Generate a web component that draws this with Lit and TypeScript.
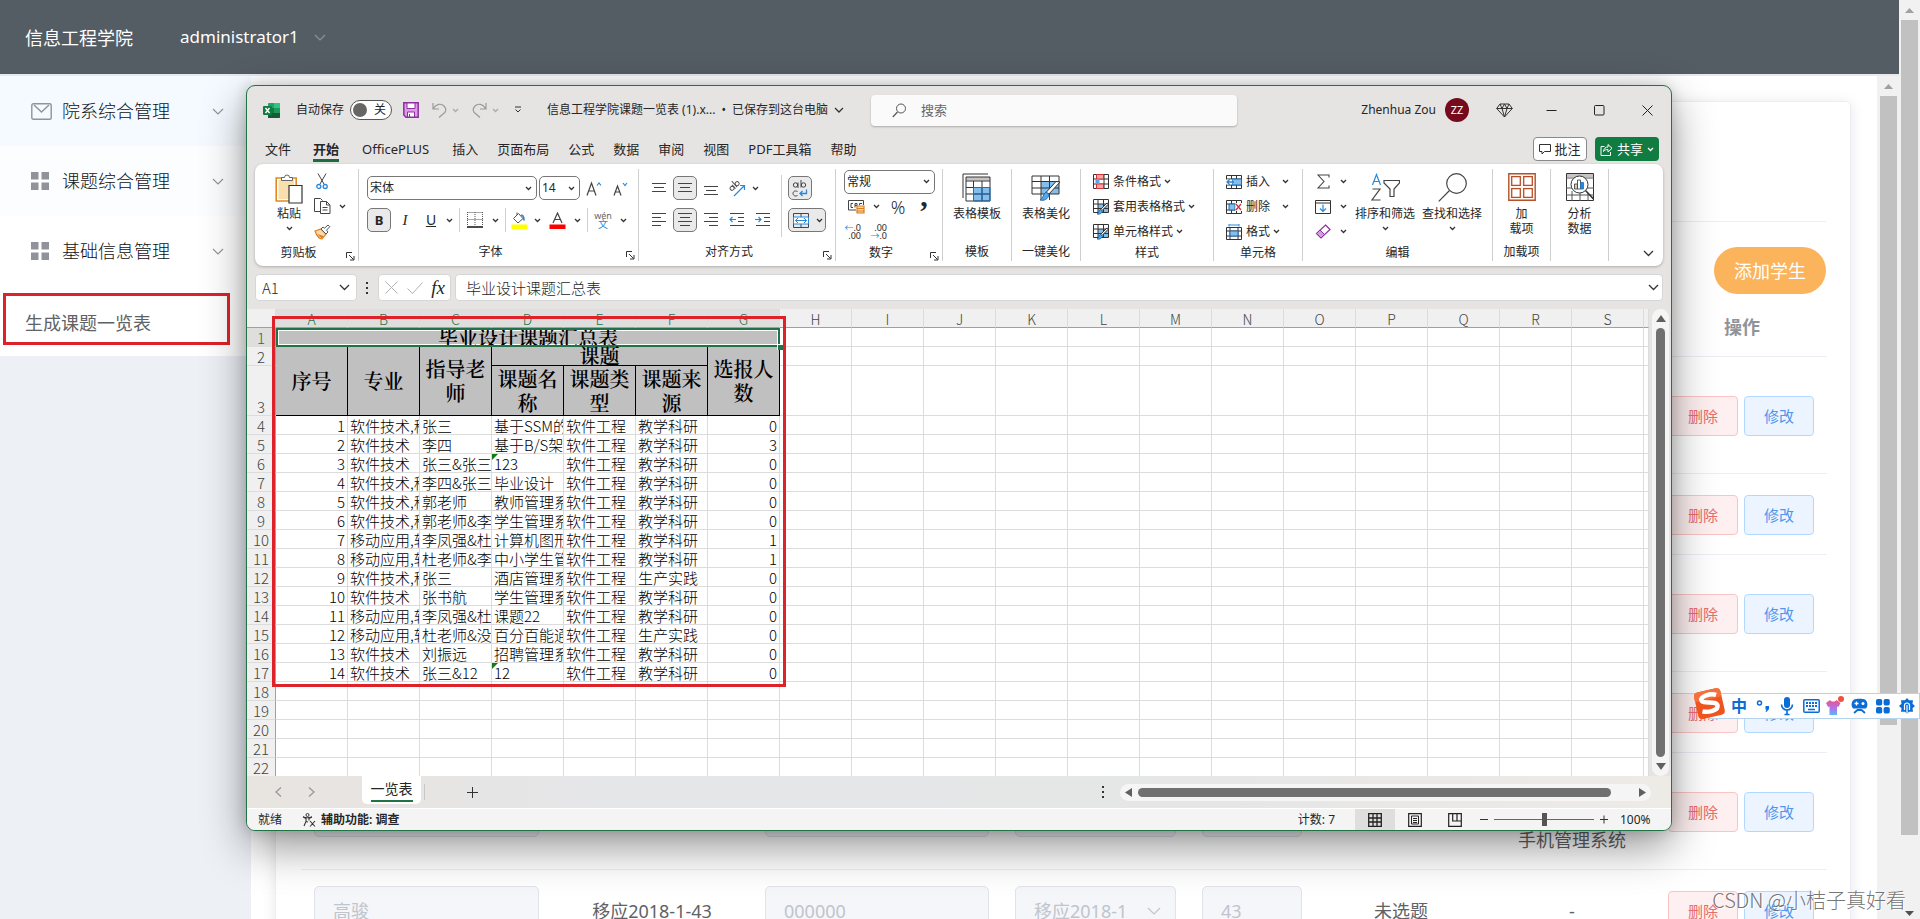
import { LitElement, html, css, svg, nothing } from "lit";
import { customElement } from "lit/decorators.js";

const icon = (w: number, h: number, body: unknown) =>
  html`<svg width=${w} height=${h} viewBox="0 0 ${w} ${h}" fill="none" aria-hidden="true">${body}</svg>`;

const chev = (w = 6, color = "#333", sw = 1.3) => {
  const h = Math.ceil(w / 2) + 2;
  return html`<svg width=${w + 2} height=${h} viewBox="0 0 ${w + 2} ${h}" fill="none" aria-hidden="true">
    <path d="M1 1 L${w / 2 + 1} ${w / 2 + 1} L${w + 1} 1" stroke=${color} stroke-width=${sw} />
  </svg>`;
};

const lines = (rows: [number, number, number][]) =>
  svg`${rows.map(([x1, x2, y]) => svg`<path d="M${x1} ${y + 0.5}H${x2}" stroke="#444"/>`)}`;

const I = {
  excel: icon(17, 17, svg`<rect x="5" y="1" width="12" height="15" rx="1" fill="#21a366"/><path d="M11 1h5a1 1 0 0 1 1 1v4h-6z" fill="#33c481"/><path d="M5 6h6v5H5z" fill="#107c41"/><path d="M11 6h6v5h-6z" fill="#1b9a5b"/><path d="M5 11h12v4a1 1 0 0 1-1 1H5z" fill="#185c37"/><rect x="0" y="4" width="9" height="9" rx="1" fill="#107c41"/><path d="M2.5 6l4 5M6.500 6l-4 5" stroke="#fff" stroke-width="1.400"/>`),
  save: icon(16, 16, svg`<path d="M.8.8h14.400v14.400H3L.8 13z" fill="#dc9be6" stroke="#8f2fa0" stroke-width="1.500"/><path d="M4 1h8v5.500H4z" fill="#fff" stroke="#8f2fa0"/><path d="M4.500 10h7v5h-7z" fill="#fff" stroke="#8f2fa0"/><path d="M6.500 12v3" stroke="#8f2fa0"/>`),
  undo: icon(15, 16, svg`<path d="M1 1v6h6M1.500 6.500C4 2 9 1 12 4s2 6-1 8l-4 3.500" stroke="#9a9a9a" stroke-width="1.200"/>`),
  redo: icon(15, 16, svg`<path d="M14 1v6H8M13.500 6.500C11 2 6 1 3 4s-2 6 1 8l4 3.500" stroke="#9a9a9a" stroke-width="1.200"/>`),
  custom: icon(8, 8, svg`<path d="M1 1h6M1.500 3.500L4 6l2.500-2.500" stroke="#333"/>`),
  search: icon(15, 15, svg`<circle cx="9" cy="5.500" r="4.500" stroke="#555"/><path d="M5.500 9L.8 14" stroke="#555" stroke-width="1.200"/>`),
  diamond: icon(17, 15, svg`<path d="M4 1h9l3.300 4.500L8.500 14 .7 5.500zM.7 5.500h15.600M4 1l2 4.500L8.500 14 11 5.500 13 1M8.500 1L6 5.500M8.500 1L11 5.500" stroke="#333"/>`),
  min: icon(11, 11, svg`<path d="M.5 5.500h10" stroke="#222"/>`),
  max: icon(11, 11, svg`<rect x=".5" y=".5" width="9.500" height="9.500" rx="1" stroke="#222"/>`),
  close: icon(11, 11, svg`<path d="M.5.500l10 10M10.500.500l-10 10" stroke="#222"/>`),
  comment: icon(12, 12, svg`<path d="M.5 1.500h11v7h-6l-2.500 2.500V8.500H.5z" stroke="#333"/>`),
  share: icon(13, 13, svg`<path d="M4.500 3.500H1v9h9.500V9" stroke="#fff"/><path d="M3.500 8.500c.5-3 2-4.500 4.500-4.500V1.500l4 3.800L8 9V6.500c-2 0-3.500.5-4.500 2z" stroke="#fff"/>`),
  paste: icon(28, 31, svg`<path d="M1.200 5h20v23H1.200z" fill="#fff" stroke="#e08a1e" stroke-width="1.600"/><path d="M3.500 7h15.500v19H3.500z" fill="#f9deae"/><path d="M6.500 7.500V4.500h3a2.500 2.500 0 0 1 5 0h3v3z" fill="#fff" stroke="#666"/><path d="M14 12.500h13v17.500H14z" fill="#fff" stroke="#333" stroke-width="1.200"/>`),
  cut: icon(12, 17, svg`<path d="M2 .5l6 10.500M10 .5L4 11" stroke="#444"/><circle cx="2.800" cy="13.500" r="2" stroke="#2b88d8" stroke-width="1.300"/><circle cx="9.200" cy="13.500" r="2" stroke="#2b88d8" stroke-width="1.300"/>`),
  copy: icon(17, 17, svg`<path d="M6 13.500H.5V.5h6l2 2" stroke="#444"/><path d="M6.500 3.500h6l3.500 3.500v8.500H6.500zM12.500 3.500V7H16M8.500 9.500h5M8.500 12h5" stroke="#444"/>`),
  brush: icon(17, 16, svg`<path d="M1 7l6-2 5 5-4 5c-3 0-5.500-4-7-8z" fill="#fbd9a5" stroke="#e07b1a" stroke-width="1.200"/><path d="M3 10l5 4.500 1.500-2.500z" fill="#e07b1a"/><path d="M7 5l2-2 1.500 1.200L14 1l1.800 1.700-3.300 3.500L14 8l-2 2z" fill="#fff" stroke="#555"/>`),
  launch: icon(9, 9, svg`<path d="M.5 6V.5H6M3 3l4.500 4.500M8 4v4H4" stroke="#333"/>`),
  grow: icon(16, 15, svg`<path d="M1 14.500L5.500 2l4.500 12.500M2.600 10h5.800" stroke="#444" stroke-width="1.200"/><path d="M11 4.500L13 2l2 2.500" stroke="#2b88d8" stroke-width="1.200"/>`),
  shrink: icon(16, 15, svg`<path d="M2 14.500L5.500 5 9 14.500M3.300 11h4.400" stroke="#444" stroke-width="1.200"/><path d="M11 2l2 2.500L15 2" stroke="#2b88d8" stroke-width="1.200"/>`),
  borders: icon(16, 16, svg`<path d="M.5.500h15M.5 7.500h15M.5 0v14M8 0v14M15.500 0v14" stroke="#555" stroke-dasharray="1 1"/><path d="M0 15h16" stroke="#111" stroke-width="1.500"/>`),
  fill: icon(17, 17, svg`<path d="M2.500 6.500l5-5 4.500 5-5 4.500z" stroke="#555" fill="#fff"/><path d="M6 3V.5" stroke="#555"/><path d="M10 3c2.500 0 3 2.500 3 5.500" stroke="#2b88d8" stroke-width="1.700"/><path d="M.5 12.500h16V17H.5z" fill="#ff0"/>`),
  fontColor: icon(17, 17, svg`<path d="M4 11L8.500 1 13 11M5.500 7.500h6" stroke="#444" stroke-width="1.200"/><path d="M.5 12.500h16V17H.5z" fill="#f00"/>`),
  orient: icon(17, 17, svg`<g transform="rotate(-42 6 7)"><circle cx="3" cy="6" r="2" stroke="#555"/><path d="M5.300 3.500V8.500M7.500.5v8" stroke="#555"/><circle cx="9.800" cy="6" r="2" stroke="#555"/></g><path d="M5 16L15 6M11 5.500h4.500V10" stroke="#2b88d8" stroke-width="1.200"/>`),
  wrap: icon(16, 17, svg`<circle cx="3.500" cy="5" r="2.200" stroke="#444"/><path d="M6 2.500V8M9 0v7.500" stroke="#444"/><circle cx="11.500" cy="5" r="2.200" stroke="#444"/><path d="M5.500 11.500c-3-1.500-4.500.5-4.500 2s2 3.500 4.500 2" stroke="#444"/><path d="M14.500 9.500v4H8M10.500 11L8 13.500l2.500 2.500" stroke="#2b88d8" stroke-width="1.300"/>`),
  merge: icon(16, 15, svg`<path d="M.5.500h15v14H.5zM8 .5V4M8 11v3.500" stroke="#444"/><path d="M.5 4h15v7H.5z" fill="#fff" stroke="#2b88d8"/><path d="M2.500 7.500h11M5 5L2.500 7.500 5 10M11 5l2.500 2.500L11 10" stroke="#2b88d8"/>`),
  money: icon(17, 15, svg`<path d="M8 11H.5V1.500h15V6" stroke="#444"/><path d="M5 4.500H3v4h2M7 8.500v-4h2v2H7M11.500 6V4.500H14" stroke="#444"/><path d="M9 7h7v7H9z" fill="#fbd9a5" stroke="#e07b1a" stroke-width="1.200"/><path d="M9 9.500h7M9 12h7" stroke="#e07b1a"/>`),
  table: icon(29, 29, svg`<path d="M1 25V1h25" stroke="#333"/><path d="M4 4h24v24H4z" fill="#fff"/><path d="M4 4h24v3.500H4z" fill="#c9c4c4"/><path d="M12 14.500h16V28H12z" fill="#83beec"/><path d="M4 4h24v24H4zM4 8h24M4 14.500h24M4 21h24M11.500 8v20M20 8v20" stroke="#333"/><path d="M11.500 14.500H28V28H11.500zM11.500 21H28M20 14.500V28" stroke="#1f6fb5"/>`),
  beauty: icon(30, 29, svg`<path d="M10 8h18v13H10z" fill="#83beec"/><path d="M10 27V3H1v18h27V3H10M1 8.500h27M1 15h27M18.500 3v24" stroke="#333"/><path d="M29 9L18 21l-3-1.500L25 8.500z" fill="#fff" stroke="#333"/><path d="M15 19l3 2.500c-1 5-5 6.500-9 5.500 3-1 3-6 6-8z" fill="#5aa5e2" stroke="#1f6fb5"/>`),
  cond: icon(16, 15, svg`<path d="M.5.500h15v14H.5zM.5 5h15M.5 10h15M5 .5v14M11 .5v14" stroke="#333"/><path d="M3.500.500h7v4.500h-7zM3.500 10h7v4.500h-7z" fill="#f7a6a6" stroke="#d13438"/><path d="M2.500 5h4v5h-4z" fill="#5aa5e2"/>`),
  fmt: icon(16, 16, svg`<path d="M5 5h10v9H5z" fill="#83beec"/><path d="M.5.500h15v13H.5zM.5 5h15M.5 9.500h15M5 .5v13M10.500.500v13" stroke="#333"/><path d="M15.500 5L9 11.500 7.500 10.500 14 4z" fill="#fff" stroke="#333"/><path d="M7.500 10.500L9.500 12c-1 3-3.500 3.500-5.500 3 2-1 1.500-3.500 3.500-4.500z" fill="#5aa5e2" stroke="#1f6fb5"/>`),
  insert: icon(16, 14, svg`<path d="M.5.500h15v13H.5zM.5 4h15M.5 10h15M5.500.500v13M10.500.500v13" stroke="#333"/><path d="M6 4h9.500v6H6z" fill="#83beec" stroke="#1f6fb5"/><path d="M0 4.500h6v5H0z" fill="#fff"/><path d="M8 7H1M4 4L1 7l3 3" stroke="#2b88d8" stroke-width="1.300"/>`),
  del: icon(16, 14, svg`<path d="M.5.500h15v13H.5zM.5 4h15M.5 10h15M5.500.500v13M10.500.500v13" stroke="#333"/><path d="M3 4h6v6H3z" fill="#83beec" stroke="#1f6fb5"/><path d="M9.500 3h6.500v8H9.500z" fill="#fff"/><path d="M10 4l5 6M15 4l-5 6" stroke="#d13438" stroke-width="1.300"/>`),
  format: icon(16, 16, svg`<path d="M.5 3.500h15v12H.5zM.5 7h15M.5 12h15M4 3.500v12M12 3.500v12" stroke="#333"/><path d="M4 7h8v5H4z" fill="#83beec" stroke="#1f6fb5"/><path d="M3 1h10M3 0v2.500M13 0v2.500" stroke="#2b88d8"/>`),
  sigma: icon(13, 15, svg`<path d="M12 3.500V1H1l6 6.500L1 14h11v-2.500" stroke="#444" stroke-width="1.100"/>`),
  down: icon(16, 14, svg`<path d="M.5.500h15v13H.5zM.5 3h15" stroke="#333"/><path d="M8 4.500v7M5 8.500l3 3 3-3" stroke="#2b88d8" stroke-width="1.200"/>`),
  eraser: icon(16, 15, svg`<path d="M10.500 1L15 5.500 6 14 1.500 9.500z" fill="#fff" stroke="#8f2fa0" stroke-width="1.200"/><path d="M5 6L9.500 10.500 6 14 1.500 9.500z" fill="#d59be0" stroke="#8f2fa0"/>`),
  sort: icon(29, 28, svg`<path d="M1.500 12L5.500 1.500 9.500 12M3 8.500h5" stroke="#2b88d8" stroke-width="1.200"/><path d="M1.500 16h7.500L1 27h8.500" stroke="#444" stroke-width="1.200"/><path d="M13 7.500h15.500v2.500l-5.500 6v7.500h-4v-7.500l-6-6z" stroke="#444" stroke-width="1.200"/>`),
  find: icon(29, 29, svg`<circle cx="18.500" cy="10.500" r="9.800" stroke="#444" stroke-width="1.200"/><path d="M11.500 17.500L.8 28.300" stroke="#444" stroke-width="1.200"/>`),
  addin: icon(28, 28, svg`<path d="M.8.8h26.400v26.400H.8z" fill="#fff7f0" stroke="#b5502a" stroke-width="1.400"/><path d="M3.700 3.700h8.600v8.600H3.700zM15.700 3.700h8.600v8.600h-8.600zM3.700 15.700h8.600v8.600H3.700zM15.700 15.700h8.600v8.600h-8.600z" fill="#fff" stroke="#b5502a" stroke-width="1.300"/>`),
  analyse: icon(28, 28, svg`<path d="M.5.500h27v27H.5z" fill="#fff" stroke="#333"/><path d="M1 1h26v3H1z" fill="#c9c4c4"/><path d="M0 5h28M0 15h28M0 22h28M6 18v10M14 18v10M22 20v8" stroke="#555"/><circle cx="13.500" cy="11.500" r="8.500" fill="#fff" stroke="#333"/><path d="M19.500 17.500l8 8.500" stroke="#333" stroke-width="1.600"/><path d="M8.500 11h3v5h-3z" fill="#ccc" stroke="#333" stroke-width=".8"/><path d="M11.500 7h3v9h-3z" fill="#fff" stroke="#333" stroke-width=".8"/><path d="M14.500 9.500h3V16h-3z" fill="#2b88d8" stroke="#1f6fb5" stroke-width=".8"/>`),
  access: icon(15, 14, svg`<circle cx="5.500" cy="2" r="1.500" stroke="#333"/><path d="M1 4l3 1.500v3L2 13M10 4L7 5.500v2M4 8.500l2 .5M1 4l4 .8h1L10 4M8 8l5 5.500M13 8l-5 5.500" stroke="#333" stroke-width="1.100"/>`),
  normal: icon(14, 14, svg`<path d="M.7.7h12.600v12.600H.7zM.7 5h12.600M.7 9h12.600M5 .7v12.600M9 .7v12.600" stroke="#222" stroke-width="1.300"/>`),
  layout: icon(14, 14, svg`<path d="M.7.700h12.600v12.600H.7z" stroke="#222" stroke-width="1.200"/><path d="M3.500 3h7v8h-7zM5 5.500h4M5 7.500h4M5 9.500h4" stroke="#222"/>`),
  breaks: icon(14, 14, svg`<path d="M.7.700h12.600v12.600H.7zM4.700.700v7.300h8.600M9 .7V8" stroke="#222" stroke-width="1.200"/>`),
  mail: icon(21, 17, svg`<rect x=".8" y=".8" width="19.400" height="15.400" rx="1.500" stroke="#909399" stroke-width="1.400"/><path d="M3 2l7.500 7L18 2" stroke="#909399" stroke-width="1.400"/>`),
  squares: icon(18, 18, svg`<path d="M0 0h7.500v7.500H0zM10.500 0H18v7.500h-7.500zM0 10.500h7.500V18H0zM10.500 10.500H18V18h-7.500z" fill="#909399"/>`),
  sogou: icon(34, 34, svg`<g transform="rotate(-13 17 17)"><rect x="3" y="3" width="27" height="27" rx="4" fill="#f0541e"/><path d="M3 7a4 4 0 0 1 4-4h19a4 4 0 0 1 4 4v5H3z" fill="#f4713d"/><path d="M25 9.500C20 6.500 9.500 7 9.500 11.500S24 14.500 24 20s-11 5-16 2.500" stroke="#fff" stroke-width="4.500"/></g>`),
  comma: icon(14, 16, svg`<circle cx="3.500" cy="5" r="2" stroke="#0a6cd6" stroke-width="1.500"/><path d="M9.500 8h3.500v3L10.500 14l-1-.5 1-2h-1z" fill="#0a6cd6"/>`),
  mic: icon(14, 19, svg`<rect x="4" y="0" width="6" height="11" rx="3" fill="#0a6cd6"/><path d="M1.500 7.500a5.500 5.500 0 0 0 11 0M7 13v5M4.500 17.500h5" stroke="#0a6cd6" stroke-width="1.600"/>`),
  kb: icon(17, 14, svg`<rect x=".8" y=".8" width="15.400" height="12.400" rx="1" stroke="#0a6cd6" stroke-width="1.500"/><path d="M3 4h11M3 7h11" stroke="#0a6cd6" stroke-width="2" stroke-dasharray="2 1"/><path d="M5 10.500h7" stroke="#0a6cd6" stroke-width="1.500"/>`),
  shirt: icon(19, 20, svg`<defs><linearGradient id="sh" x1="0" y1="0" x2="0" y2="1"><stop offset="0" stop-color="#f0508a"/><stop offset=".6" stop-color="#a878f0"/><stop offset="1" stop-color="#5ab8f8"/></linearGradient></defs><path d="M0 7l4-3c1.500 2 5 2 6.500 0l4 3-2 4-1.500-.5V19H3.500v-8.500L2 11z" fill="url(#sh)"/><circle cx="15" cy="3" r="3" fill="#f0503c"/>`),
  game: icon(17, 16, svg`<path d="M3 1.500C5 .5 12 .5 14 1.500c3 2 3 7 1 9H2C0 8.500 0 3.500 3 1.500z" fill="#0a6cd6"/><path d="M5.500 3.500v4M3.500 5.500h4" stroke="#fff" stroke-width="1.300"/><circle cx="12" cy="5.500" r="1.500" fill="#fff"/><path d="M3 15l3.500-3h4l3.500 3" stroke="#0a6cd6" stroke-width="1.800"/>`),
  apps: icon(14, 15, svg`<rect width="6.200" height="6.500" rx="1.800" fill="#0a6cd6"/><rect x="7.600" width="6.200" height="6.500" rx="1.800" fill="#0a6cd6"/><rect y="8" width="6.200" height="6.500" rx="1.800" fill="#0a6cd6"/><rect x="7.600" y="8" width="6.200" height="6.500" rx="1.800" fill="#0a6cd6"/>`),
  gear: icon(16, 16, svg`<path d="M8 0l2 2.200h4l-.5 3.600L16 8l-2.500 2.200.5 3.600h-4L8 16l-2-2.200H2l.5-3.600L0 8l2.500-2.200L2 2.200h4z" fill="#0a6cd6"/><path d="M8 16V7M5.500 12V7.500a2.500 2.500 0 0 1 5 0V12" stroke="#fff" stroke-width="1.200"/>`),
};

const A = {
  top: icon(16, 16, lines([[1, 15, 3], [3, 13, 7], [1, 15, 11]])),
  mid: icon(16, 16, lines([[1, 15, 3], [3, 13, 7], [1, 15, 11]])),
  bottom: icon(16, 16, lines([[1, 15, 6], [3, 13, 10], [1, 15, 14]])),
  left: icon(16, 16, lines([[1, 15, 1], [1, 10, 5], [1, 15, 9], [1, 10, 13]])),
  center: icon(16, 16, lines([[1, 15, 1], [3, 13, 5], [1, 15, 9], [3, 13, 13]])),
  right: icon(16, 16, lines([[1, 15, 1], [6, 15, 5], [1, 15, 9], [6, 15, 13]])),
  out: icon(16, 16, svg`${lines([[1, 15, 1], [9, 15, 5], [9, 15, 9], [1, 15, 13]])}<path d="M7 7.500H1M3.500 5L1 7.500 3.500 10" stroke="#2b88d8" stroke-width="1.200"/>`),
  in: icon(16, 16, svg`${lines([[1, 15, 1], [9, 15, 5], [9, 15, 9], [1, 15, 13]])}<path d="M0 7.500h6M3.500 5L6 7.500 3.500 10" stroke="#2b88d8" stroke-width="1.200"/>`),
};

const COLS = "ABCDEFGHIJKLMNOPQRS".split("");
const SHEET: string[][] = [
  ["1", "软件技术,移", "张三", "基于SSM的", "软件工程", "教学科研", "0"],
  ["2", "软件技术", "李四", "基于B/S架构", "软件工程", "教学科研", "3"],
  ["3", "软件技术", "张三&张三", "123", "软件工程", "教学科研", "0"],
  ["4", "软件技术,移", "李四&张三", "毕业设计", "软件工程", "教学科研", "0"],
  ["5", "软件技术,移", "郭老师", "教师管理系", "软件工程", "教学科研", "0"],
  ["6", "软件技术,移", "郭老师&李", "学生管理系", "软件工程", "教学科研", "0"],
  ["7", "移动应用,软", "李凤强&杜", "计算机图形", "软件工程", "教学科研", "1"],
  ["8", "移动应用,软", "杜老师&李", "中小学生管", "软件工程", "教学科研", "1"],
  ["9", "软件技术,移", "张三", "酒店管理系", "软件工程", "生产实践", "0"],
  ["10", "软件技术", "张书航", "学生管理系", "软件工程", "教学科研", "0"],
  ["11", "移动应用,软", "李凤强&杜", "课题22", "软件工程", "教学科研", "0"],
  ["12", "移动应用,软", "杜老师&没", "百分百能通", "软件工程", "生产实践", "0"],
  ["13", "软件技术", "刘振远", "招聘管理系", "软件工程", "教学科研", "0"],
  ["14", "软件技术", "张三&12", "12", "软件工程", "教学科研", "0"],
];

@customElement("sheet-window")
class SheetWindow extends LitElement {
  static styles = css`
    * { box-sizing: border-box; }
    :host {
      display: flex; flex-direction: column; overflow: hidden;
      border: 1px solid #217346; border-radius: 9px; background: #e6e4e2;
      color: #262626; font: 12px/16px "Noto Sans", "Noto Sans CJK SC", sans-serif;
      box-shadow: 0 16px 44px rgba(0, 0, 0, .42), 0 0 14px rgba(0, 0, 0, .16);
    }
    svg { display: block; flex: none; }
    button { font: inherit; color: inherit; background: none; border: 0; padding: 0; margin: 0; display: flex; align-items: center; justify-content: center; white-space: nowrap; }
    input, select { font: inherit; color: inherit; margin: 0; }
    .title { display: flex; align-items: center; height: 48px; flex: none; }
    .quick { display: flex; align-items: center; width: 300px; padding-left: 16px; flex: none; }
    .auto { display: flex; align-items: center; gap: 6px; margin: 0 11px 0 16px; white-space: nowrap; }
    .toggle { display: flex; align-items: center; justify-content: space-between; width: 42px; height: 20px; border: 1px solid #555; border-radius: 10px; background: #fff; padding: 0 5px 0 2px; }
    .toggle input { appearance: none; width: 14px; height: 14px; border-radius: 50%; background: #666; }
    .quick .undo { margin-left: 13px; gap: 5px; }
    .quick .more { margin-left: 15px; }
    .file { display: flex; align-items: center; gap: 6px; width: 324px; white-space: nowrap; flex: none; }
    .search { display: flex; align-items: center; gap: 14px; width: 366px; height: 31px; padding-left: 21px; background: #fafafa; border-radius: 4px; box-shadow: 0 1px 2px rgba(0, 0, 0, .25); font-size: 13px; }
    .search input { flex: 1; border: 0; background: none; outline: 0; padding: 0; min-width: 0; }
    .search input::placeholder { color: #666; opacity: 1; }
    .user { display: flex; align-items: center; margin-left: auto; }
    .avatar { width: 24px; height: 24px; border-radius: 50%; background: #750b1c; color: #fff; font-size: 11px; line-height: 24px; text-align: center; margin: 0 12px 0 9px; }
    .win { width: 48px; height: 32px; }
    .gem { width: 46px; height: 32px; }
    .tabs { display: flex; align-items: center; height: 30px; padding: 0 12px 0 18px; gap: 19px; font-size: 13px; line-height: 20px; flex: none; }
    .tabs .tab { height: 26px; border-bottom: 3px solid transparent; padding-top: 2px; }
    .tabs .tab:first-child { margin-right: 3px; }
    .tabs .tab:nth-child(3) { padding: 2px 4px 0; }
    .tabs .on { font-weight: 700; border-color: #1e6b41; }
    .note { margin-left: auto; height: 24px; width: 54px; gap: 3px; border: 1px solid #8a8a8a; border-radius: 4px; background: #fff; }
    .share { height: 24px; width: 64px; gap: 4px; border-radius: 4px; background: #107c41; color: #fff; margin-left: -11px; }
    .ribbon { display: flex; margin: 0 8px; height: 102px; padding: 5px 0; background: #fff; border-radius: 8px; box-shadow: 0 1px 3px rgba(0, 0, 0, .25); flex: none; }
    .group { display: flex; flex-direction: column; border-right: 1px solid #cfcfcf; flex: none; }
    .g58 { width: 58px; } .g69 { width: 69px; } .g89 { width: 89px; } .g104 { width: 104px; } .g107 { width: 107px; }
    .g133 { width: 133px; } .g190 { width: 190px; } .g197 { width: 197px; } .g280 { width: 280px; }
    .body { display: flex; height: 76px; justify-content: center; }
    .body.start { justify-content: flex-start; padding-left: 8px; }
    .body.near { padding-left: 6px; }
    .foot { display: flex; line-height: 18px; white-space: nowrap; }
    .foot span { flex: 1; text-align: center; }
    .foot button { align-self: flex-end; padding-bottom: 1px; width: 16px; }
    .big { display: flex; flex-direction: column; align-items: center; justify-content: flex-start; line-height: 15px; padding-top: 4px; }
    .big .pic { height: 33px; display: flex; }
    .big .arrow { margin-top: 5px; }
    .pair { display: flex; gap: 7px; padding-left: 4px; }
    .rows3 { display: flex; flex-direction: column; }
    .rows3 .line { height: 25px; }
    .shift { padding-left: 5px; }
    .line { display: flex; align-items: center; justify-content: flex-start; height: 24px; }
    .rows2 { display: flex; flex-direction: column; gap: 8px; padding-top: 7px; }
    .s12 { width: 12px; } .s16 { width: 16px; } .s24 { width: 24px; } .s28 { width: 28px; }
    .cell { display: flex; align-items: center; justify-content: center; height: 24px; flex: none; }
    .press { border: 1px solid #777; border-radius: 5px; background: #eaeaea; height: 24px; }
    .bar { width: 1px; height: 24px; background: #cfcfcf; margin: 0 1px 0 4px; }
    .bar.high { height: 62px; margin: 6px 6px 0 4px; }
    .combo { display: flex; align-items: center; height: 24px; border: 1px solid #777; border-radius: 5px; padding: 0 4px 0 2px; background: #fff; }
    .combo select { appearance: none; border: 0; background: none; outline: 0; flex: 1; min-width: 0; padding: 0; }
    .w170 { width: 170px; } .w40 { width: 41px; margin-left: 2px; } .w91 { width: 91px; }
    .bold { font-weight: 700; font-size: 13px; }
    .ital { font: italic 15px "Liberation Serif", serif; }
    .under { text-decoration: underline; font-size: 14px; }
    .wen { flex-direction: column; font-size: 9px; line-height: 9px; color: #666; }
    .wen b { font-weight: 400; color: #2b88d8; font-size: 10px; }
    .pct { font-size: 18px; font-weight: 300; }
    .com { font: 700 30px/2px "Liberation Serif", serif; align-items: flex-start; }
    .dec { flex-direction: column; font-size: 9px; line-height: 8px; align-items: flex-end; width: 17px; margin-right: 9px; }
    .dec i { font-style: normal; color: #2b88d8; }
    .cmd > svg { margin-left: 3px; }
    .push > svg { margin-left: 12px; }
    .collapse { margin: 0 9px 4px auto; align-self: flex-end; }
    .formula { display: flex; margin: 8px 8px; height: 27px; font-size: 15px; line-height: 20px; flex: none; font-family: "Noto Sans CJK SC", sans-serif; font-weight: 300; }
    .white { display: flex; align-items: center; background: #fff; border: 1px solid #d6d6d6; border-radius: 4px; padding: 0 8px 0 6px; }
    .white input { border: 0; outline: 0; padding: 0; min-width: 0; flex: 1; background: none; }
    .name { width: 102px; padding-right: 6px; }
    .dots { width: 21px; display: flex; align-items: center; justify-content: center; }
    .fx { width: 73px; justify-content: space-between; margin-right: 4px; padding-right: 5px; }
    .fx span { font: italic 19px "Liberation Serif", serif; }
    .long { flex: 1; padding-left: 10px; padding-right: 3px; }
    .area { display: flex; position: relative; height: 467px; flex: none; }
    .grid { flex: 1; overflow: hidden; background: #fff; min-width: 0; }
    table { border-collapse: separate; border-spacing: 0; table-layout: fixed; width: 1402px; font: 300 15px/16px "Noto Sans CJK SC", sans-serif; color: #000; }
    col { width: 72px; } col.rh { width: 29px; } col.last { width: 5px; }
    td, th { padding: 0; height: 19px; border-right: 1px solid #dcdcdc; border-bottom: 1px solid #dcdcdc; font-weight: 300; }
    th { padding-top: 2px; background: #f0f0f0; color: #444; }
    thead th { border-bottom-color: #a0a0a0; font-size: 14px; }
    tbody th { border-right-color: #a0a0a0; vertical-align: bottom; }
    thead .sel, tbody .sel { background: #dedede; color: #217346; }
    td div { height: 18px; overflow-x: clip; white-space: nowrap; padding: 2px 2px 0; }
    td.num { text-align: right; }
    td.flag { background: linear-gradient(135deg, #107c10 4px, transparent 4.5px); }
    .cap { background: #c0c0c0; border-color: #000; text-align: center; font-weight: 600; font-size: 20px; line-height: 24px; font-family: "Noto Serif CJK SC", "Noto Sans CJK SC", serif; padding: 0 5px; vertical-align: middle; }
    .cap div { padding: 0; line-height: 18px; }
    .cap.head { border: 2px solid #217346; padding: 0; box-shadow: inset 0 0 0 1px #fff; }
    .cap.head div { height: 15px; line-height: 15px; overflow: hidden; }
    .high { height: 50px; }
    .handle { position: absolute; left: 530px; top: 35px; width: 6px; height: 6px; background: #217346; border: 1px solid #fff; border-right: 0; border-bottom: 0; }
    .mark { position: absolute; left: 25px; top: 7px; width: 514px; height: 371px; border: 3px solid #dd2229; }
    .vscroll { width: 17px; margin: 0 2px 0 3px; border-radius: 9px; background: #f5f5f5; display: flex; flex-direction: column; align-items: center; gap: 6px; padding: 6px 0; }
    .vscroll i { flex: 1; width: 9px; border-radius: 5px; background: #707070; }
    .sheets { display: flex; align-items: center; height: 32px; background: linear-gradient(90deg, #e8e4e0, #e5e6e8 25%, #e6e6e6 70%, #eeebe6); padding: 0 20px 0 27px; flex: none; }
    .sheets .nav { width: 8px; margin-right: 25px; }
    .sheets .tabname { align-self: flex-start; height: 28px; width: 59px; background: #fff; border-radius: 0 0 5px 5px; font-size: 14px; margin-left: 22px; }
    .tabname span { border-bottom: 2px solid #217346; line-height: 22px; }
    .sep { width: 1px; height: 16px; background: #c8c8c8; margin: 0 42px 0 3px; }
    .hscroll { display: flex; align-items: center; gap: 6px; width: 531px; height: 17px; border-radius: 9px; background: #f5f5f5; padding: 0 5px; }
    .hscroll i { width: 473px; height: 9px; border-radius: 5px; background: #707070; }
    .hscroll svg:last-child { margin-left: auto; }
    .sheets .menu { margin-left: auto; margin-right: 15px; }
    .status { display: flex; align-items: center; flex: 1; background: #f4f4f4; border-top: 1px solid #fff; padding: 0 19px 0 11px; }
    .status .acc { display: flex; gap: 4px; margin-left: 20px; font-weight: 600; align-items: center; }
    .status .count { margin-left: auto; margin-right: 20px; }
    .status .view { width: 40px; height: 21px; }
    .status .cur { background: #dedede; }
    .zoom { display: flex; align-items: center; gap: 6px; margin-left: 5px; }
    .zoom input { appearance: none; width: 100px; height: 14px; background: linear-gradient(#666, #666) center / 100% 1px no-repeat; }
    .zoom input::-webkit-slider-thumb { appearance: none; width: 5px; height: 13px; background: #555; }
    .pc { margin-left: 12px; width: 32px; }
  `;

  private foot(text: string, launch = false) {
    return html`<div class="foot"><span>${text}</span>${launch ? html`<button aria-label=${text + "设置"}>${I.launch}</button>` : nothing}</div>`;
  }

  private cell(v: string, c: number) {
    const num = c === 0 || c === 6;
    const flag = c === 3 && /^\d+$/.test(v);
    return html`<td class="${num ? "num" : ""} ${flag ? "flag" : ""}"><div>${v}</div></td>`;
  }

  private blanks(n: number) {
    return Array.from({ length: n }, () => html`<td></td>`);
  }

  private grid() {
    return html`<table aria-label="毕业设计课题汇总表">
      <colgroup><col class="rh" />${COLS.map(() => html`<col />`)}<col class="last" /></colgroup>
      <thead><tr><th></th>${COLS.map((c, i) => html`<th class=${i < 7 ? "sel" : ""}>${c}</th>`)}<th></th></tr></thead>
      <tbody>
        <tr><th class="sel">1</th><td class="cap head" colspan="7"><div>毕业设计课题汇总表</div></td>${this.blanks(13)}</tr>
        <tr><th>2</th>
          <td class="cap" rowspan="2">序号</td><td class="cap" rowspan="2">专业</td><td class="cap" rowspan="2">指导老师</td>
          <td class="cap" colspan="3"><div>课题</div></td><td class="cap" rowspan="2">选报人数</td>${this.blanks(13)}</tr>
        <tr><th class="high">3</th><td class="cap">课题名称</td><td class="cap">课题类型</td><td class="cap">课题来源</td>${this.blanks(13)}</tr>
        ${SHEET.map((r, i) => html`<tr><th>${i + 4}</th>${r.map((v, c) => this.cell(v, c))}${this.blanks(13)}</tr>`)}
        ${[18, 19, 20, 21, 22].map((n) => html`<tr><th>${n}</th>${this.blanks(20)}</tr>`)}
      </tbody>
    </table>`;
  }

  private ribbon() {
    const c = chev(5);
    const big = (pic: unknown, a: string, b: unknown = nothing) =>
      html`<button class="big"><span class="pic">${pic}</span><span>${a}</span>${b}</button>`;
    const arrow = html`<span class="arrow">${c}</span>`;
    return html`<div class="ribbon">
      <section class="group g104">
        <div class="body start">
          <div class="cell s12"></div>
          ${big(I.paste, "粘贴", arrow)}
          <div class="rows3 shift">
            <div class="line"><button class="cell s28" aria-label="剪切">${I.cut}</button></div>
            <div class="line"><button class="cell s28" aria-label="复制">${I.copy}</button><span class="cell s12">${c}</span></div>
            <div class="line"><button class="cell s28" aria-label="格式刷">${I.brush}</button></div>
          </div>
        </div>${this.foot("剪贴板", true)}
      </section>
      <section class="group g280">
        <div class="body start"><div class="rows2">
          <div class="line">
            <label class="combo w170"><select aria-label="字体"><option>宋体</option></select>${c}</label>
            <label class="combo w40"><select aria-label="字号"><option>14</option></select>${c}</label>
            <button class="cell s28" aria-label="增大字号">${I.grow}</button><button class="cell s24" aria-label="减小字号">${I.shrink}</button>
          </div>
          <div class="line">
            <button class="press s24 bold">B</button><button class="cell s28 ital">I</button><button class="cell s24 under">U</button><span class="cell s12">${c}</span>
            <span class="bar"></span><button class="cell s28" aria-label="边框">${I.borders}</button><span class="cell s12">${c}</span>
            <span class="bar"></span><button class="cell s24" aria-label="填充颜色">${I.fill}</button><span class="cell s12">${c}</span>
            <button class="cell s28" aria-label="字体颜色">${I.fontColor}</button><span class="cell s12">${c}</span>
            <span class="bar"></span><button class="cell s28 wen"><span>wén</span><b>文</b></button><span class="cell s12">${c}</span>
          </div>
        </div></div>${this.foot("字体", true)}
      </section>
      <section class="group g197">
        <div class="body start near">
          <div class="rows2">
            <div class="line"><button class="cell s28" aria-label="顶端对齐">${A.top}</button><button class="press s24" aria-label="垂直居中">${A.mid}</button><button class="cell s28" aria-label="底端对齐">${A.bottom}</button><button class="cell s24" aria-label="方向">${I.orient}</button><span class="cell s12">${c}</span></div>
            <div class="line"><button class="cell s28" aria-label="左对齐">${A.left}</button><button class="press s24" aria-label="居中">${A.center}</button><button class="cell s28" aria-label="右对齐">${A.right}</button><button class="cell s24" aria-label="减少缩进">${A.out}</button><button class="cell s28" aria-label="增加缩进">${A.in}</button></div>
          </div>
          <span class="bar high"></span>
          <div class="rows2">
            <div class="line"><button class="press s24" aria-label="自动换行">${I.wrap}</button></div>
            <div class="line"><button class="press" aria-label="合并后居中"><span class="cell s24">${I.merge}</span><span class="cell s12">${c}</span></button></div>
          </div>
        </div>${this.foot("对齐方式", true)}
      </section>
      <section class="group g107">
        <div class="body start"><div class="rows3">
          <div class="line"><label class="combo w91"><select aria-label="数字格式"><option>常规</option></select>${c}</label></div>
          <div class="line"><button class="cell s24" aria-label="会计数字格式">${I.money}</button><span class="cell s16">${c}</span><button class="cell s28 pct">%</button><button class="cell s24 com">,</button></div>
          <div class="line"><button class="cell dec"><span><i>←</i>.0</span><span>.00</span></button><button class="cell dec"><span>.00</span><span><i>→</i>.0</span></button></div>
        </div></div>${this.foot("数字", true)}
      </section>
      <section class="group g69"><div class="body">${big(I.table, "表格模板")}</div>${this.foot("模板")}</section>
      <section class="group g69"><div class="body">${big(I.beauty, "表格美化")}</div>${this.foot("一键美化")}</section>
      <section class="group g133">
        <div class="body start"><div class="rows3">
          <button class="line cmd"><span class="cell s24">${I.cond}</span>条件格式${c}</button>
          <button class="line cmd"><span class="cell s24">${I.fmt}</span>套用表格格式${c}</button>
          <button class="line cmd"><span class="cell s24">${I.fmt}</span>单元格样式${c}</button>
        </div></div>${this.foot("样式")}
      </section>
      <section class="group g89">
        <div class="body start"><div class="rows3">
          <button class="line cmd push"><span class="cell s24">${I.insert}</span>插入${c}</button>
          <button class="line cmd push"><span class="cell s24">${I.del}</span>删除${c}</button>
          <button class="line cmd"><span class="cell s24">${I.format}</span>格式${c}</button>
        </div></div>${this.foot("单元格")}
      </section>
      <section class="group g190">
        <div class="body start">
          <div class="rows3">
            <div class="line"><button class="cell s24" aria-label="自动求和">${I.sigma}</button><span class="cell s16">${c}</span></div>
            <div class="line"><button class="cell s24" aria-label="填充">${I.down}</button><span class="cell s16">${c}</span></div>
            <div class="line"><button class="cell s24" aria-label="清除">${I.eraser}</button><span class="cell s16">${c}</span></div>
          </div>
          <div class="pair">${big(I.sort, "排序和筛选", arrow)}${big(I.find, "查找和选择", arrow)}</div>
        </div>${this.foot("编辑")}
      </section>
      <section class="group g58"><div class="body">${big(I.addin, "加", html`<span>载项</span>`)}</div>${this.foot("加载项")}</section>
      <section class="group g58"><div class="body">${big(I.analyse, "分析", html`<span>数据</span>`)}</div></section>
      <button class="collapse" aria-label="折叠功能区">${chev(9)}</button>
    </div>`;
  }

  render() {
    return html`
      <div class="title">
        <div class="quick">
          ${I.excel}
          <label class="auto">自动保存<span class="toggle"><input type="checkbox" />关</span></label>
          <button aria-label="保存">${I.save}</button>
          <button class="undo" aria-label="撤消">${I.undo}${chev(5, "#aaa")}</button>
          <button class="undo" aria-label="恢复">${I.redo}${chev(5, "#aaa")}</button>
          <button class="more" aria-label="自定义快速访问工具栏">${I.custom}</button>
        </div>
        <div class="file"><span>信息工程学院课题一览表 (1).x...</span><span>•</span><span>已保存到这台电脑</span>${chev(8)}</div>
        <label class="search">${I.search}<input type="search" placeholder="搜索" aria-label="搜索" /></label>
        <div class="user"><span>Zhenhua Zou</span><span class="avatar">ZZ</span>
          <button class="gem" aria-label="高级版">${I.diamond}</button>
          <button class="win" aria-label="最小化">${I.min}</button><button class="win" aria-label="最大化">${I.max}</button><button class="win" aria-label="关闭">${I.close}</button>
        </div>
      </div>
      <nav class="tabs">
        ${["文件", "开始", "OfficePLUS", "插入", "页面布局", "公式", "数据", "审阅", "视图", "PDF工具箱", "帮助"].map(
          (t, i) => html`<button class="tab ${i === 1 ? "on" : ""}">${t}</button>`
        )}
        <button class="note">${I.comment}批注</button>
        <button class="share">${I.share}共享${chev(5, "#fff")}</button>
      </nav>
      ${this.ribbon()}
      <div class="formula">
        <label class="white name"><input value="A1" aria-label="名称框" />${chev(9)}</label>
        <span class="dots">${icon(3, 12, svg`<path d="M0 0h2v2H0zM0 5h2v2H0zM0 10h2v2H0z" fill="#333"/>`)}</span>
        <div class="white fx">
          ${icon(13, 13, svg`<path d="M.5.500l12 12M12.500.500l-12 12" stroke="#b0b0b0"/>`)}
          ${icon(16, 12, svg`<path d="M.5 6.500l5 5 10-11" stroke="#b0b0b0"/>`)}
          <span>fx</span>
        </div>
        <label class="white long"><input value="毕业设计课题汇总表" aria-label="编辑栏" />${chev(9)}</label>
      </div>
      <div class="area">
        <div class="grid">${this.grid()}</div>
        <div class="vscroll">
          ${icon(10, 7, svg`<path d="M5 0l5 7H0z" fill="#606060"/>`)}<i></i>${icon(10, 7, svg`<path d="M0 0h10L5 7z" fill="#606060"/>`)}
        </div>
        <div class="handle"></div>
        <div class="mark"></div>
      </div>
      <div class="sheets">
        <button class="nav" aria-label="上一张">${icon(7, 10, svg`<path d="M6 .5L1 5l5 4.500" stroke="#999" stroke-width="1.300"/>`)}</button>
        <button class="nav" aria-label="下一张">${icon(7, 10, svg`<path d="M1 .5L6 5 1 9.500" stroke="#999" stroke-width="1.300"/>`)}</button>
        <button class="tabname"><span>一览表</span></button><span class="sep"></span>
        <button aria-label="新工作表">${icon(11, 11, svg`<path d="M5.500 0v11M0 5.500h11" stroke="#333"/>`)}</button>
        <span class="menu">${icon(3, 12, svg`<path d="M0 0h2v2H0zM0 5h2v2H0zM0 10h2v2H0z" fill="#333"/>`)}</span>
        <div class="hscroll">${icon(7, 9, svg`<path d="M7 0v9L0 4.500z" fill="#606060"/>`)}<i></i>${icon(7, 9, svg`<path d="M0 0v9l7-4.500z" fill="#606060"/>`)}</div>
      </div>
      <div class="status">
        <span>就绪</span><span class="acc">${I.access}辅助功能: 调查</span>
        <span class="count">计数: 7</span>
        <button class="view cur" aria-label="普通">${I.normal}</button><button class="view" aria-label="页面布局">${I.layout}</button><button class="view" aria-label="分页预览">${I.breaks}</button>
        <label class="zoom">${icon(8, 9, svg`<path d="M0 4.500h8" stroke="#333"/>`)}<input type="range" min="0" max="100" value="50" aria-label="缩放" />${icon(8, 9, svg`<path d="M0 4.500h8M4 .5v8" stroke="#333"/>`)}</label>
        <span class="pc">100%</span>
      </div>`;
  }
}

interface Student { name: string; no: string; pwd: string; cls: string; seat: string; state: string; topic: string; }
const EMPTY: Student = { name: "", no: "", pwd: "", cls: "", seat: "", state: "", topic: "" };
const STUDENTS: Student[] = [
  EMPTY, EMPTY, EMPTY, EMPTY,
  { ...EMPTY, topic: "手机管理系统" },
  { name: "高骏", no: "移应2018-1-43", pwd: "000000", cls: "移应2018-1", seat: "43", state: "未选题", topic: "-" },
];

@customElement("app-root")
class AppRoot extends LitElement {
  static styles = css`
    * { box-sizing: border-box; }
    :host { display: flex; position: relative; height: 100vh; overflow: hidden; font: 18px/28px "Noto Sans", "Noto Sans CJK SC", sans-serif; color: #606266; }
    svg { display: block; flex: none; }
    button { font: inherit; margin: 0; cursor: pointer; }
    .page { flex: 1; min-width: 0; display: flex; flex-direction: column; }
    .head { display: flex; align-items: center; gap: 47px; height: 74px; padding-left: 25px; background: #545c64; color: #fff; flex: none; }
    .head .brand { padding-top: 2px; }
    .head .who { display: flex; align-items: center; gap: 15px; background: none; border: 0; padding: 0; color: #fff; font-size: 17px; }
    .main { display: flex; flex: 1; min-height: 0; border-top: 2px solid #e6e9ee; }
    .side { width: 251px; background: #edf1f6; flex: none; }
    .menu { background: #fff; height: 280px; }
    .menu button { display: flex; align-items: center; width: 100%; height: 70px; border: 0; background: #fff; color: #303133; padding: 0 27px 0 30px; text-align: left; }
    .menu button:first-child { background: #f4faff; }
    .menu button:nth-child(2) { background: #fcfdfe; }
    .menu .ico { width: 32px; padding-left: 1px; }
    .menu .lbl { flex: 1; font-weight: 300; color: #111; }
    .menu a { display: flex; align-items: center; height: 70px; padding: 4px 0 0 25px; color: #606266; text-decoration: none; }
    .content { flex: 1; min-width: 0; padding: 25px 26px 0 24px; overflow: hidden; background: #fff; }
    .card { border: 1px solid #ebeef5; border-radius: 4px; padding: 0 24px 0 25px; height: 900px; box-shadow: 0 2px 14px rgba(0, 0, 0, .1); }
    .cardhead { height: 120px; border-bottom: 1px solid #ebeef5; }
    .tools { display: flex; justify-content: flex-end; padding: 25px 0 4px; }
    .add { width: 112px; height: 47px; border: 0; border-radius: 24px; background: #fbb45c; color: #fff; padding: 0; }
    table { width: 100%; table-layout: fixed; border-collapse: separate; border-spacing: 0; }
    th { height: 59px; color: #909399; font-weight: 700; }
    td, th { border-bottom: 1px solid #ebeef5; padding: 0 13px; text-align: center; }
    td { height: 81px; padding-top: 1px; }
    .high td { height: 117px; }
    .low { vertical-align: bottom; padding-bottom: 15px; white-space: nowrap; }
    .c1 { width: 251px; } .c2 { width: 200px; } .c3 { width: 250px; } .c4 { width: 187px; } .c5 { width: 126px; } .c6 { width: 172px; } .c7 { width: 170px; } .c8 { width: 170px; }
    .field { display: flex; align-items: center; height: 50px; padding: 0 14px 0 18px; border: 1px solid #e0e3ea; border-radius: 5px; background: #f4f6fa; }
    .field input, .field select { flex: 1; min-width: 0; width: 0; border: 0; padding: 0; margin: 0; background: none; font: inherit; color: #c0c4cc; -webkit-text-fill-color: #c0c4cc; opacity: 1; appearance: none; }
    .ops { display: flex; gap: 6px; justify-content: center; padding-right: 2px; }
    .ops button { width: 70px; height: 40px; padding: 0; font-size: 15px; border-radius: 4px; flex: none; }
    .del { background: #fef0f0; border: 1px solid #fbc4c4; color: #e86c6c; }
    .edit { background: #ecf5ff; border: 1px solid #b3d8ff; color: #5196ee; }
    .scroll { width: 21px; background: #f1f1f1; display: flex; flex-direction: column; align-items: center; padding: 8px 0 3px; gap: 7px; flex: none; }
    .scroll i { width: 17px; background: #c1c1c1; }
    .scroll .inner { height: 629px; } .scroll .outer { height: 815px; }
    .scroll svg:last-child { margin-top: auto; }
    .narrow { width: 22px; }
    .box { position: absolute; left: 3px; top: 293px; width: 227px; height: 52px; border: 3px solid #dd2229; }
    sheet-window { position: absolute; left: 246px; top: 85px; width: 1426px; height: 746px; }
    .ime { position: absolute; right: 0; top: 693px; height: 26px; width: 211px; display: flex; align-items: center; justify-content: flex-end; background: #fff; border: 1px solid #b5d3ef; }
    .ime .logo { position: absolute; left: -17px; top: -7px; }
    .ime .it { width: 24px; display: flex; justify-content: center; flex: none; color: #0a6cd6; font-size: 16px; font-weight: 700; line-height: 24px; }
    .sign { position: absolute; right: 14px; top: 884px; font: 300 20px/32px "Noto Sans CJK SC", sans-serif; color: rgba(100, 100, 100, .9); text-shadow: 1px 1px 0 rgba(255, 255, 255, .9); white-space: nowrap; }
  `;

  private row(s: Student, i: number) {
    return html`<tr class=${i % 2 === 0 ? "high" : ""}>
      <td><div class="field"><input aria-label="姓名" disabled .value=${s.name} /></div></td>
      <td>${s.no}</td>
      <td><div class="field"><input aria-label="密码" disabled .value=${s.pwd} /></div></td>
      <td><div class="field"><select aria-label="班级" disabled><option>${s.cls}</option></select>${chev(12, "#c0c4cc", 1.2)}</div></td>
      <td><div class="field"><input aria-label="座号" disabled .value=${s.seat} /></div></td>
      <td>${s.state}</td>
      <td class=${s.topic.length > 1 ? "low" : ""}>${s.topic}</td>
      <td><div class="ops"><button class="del">删除</button><button class="edit">修改</button></div></td>
    </tr>`;
  }

  private bar(kind: string) {
    return html`<div class="scroll ${kind === "inner" ? "narrow" : ""}">
      ${icon(9, 5, svg`<path d="M4.500 0L9 5H0z" fill="#a0a0a0"/>`)}<i class=${kind}></i>
      ${kind === "outer" ? icon(9, 5, svg`<path d="M0 0h9L4.500 5z" fill="#505050"/>`) : nothing}
    </div>`;
  }

  render() {
    const item = (ico: unknown, t: string) =>
      html`<button><span class="ico">${ico}</span><span class="lbl">${t}</span>${chev(10, "#909399", 1.1)}</button>`;
    return html`
      <div class="page">
        <header class="head"><span class="brand">信息工程学院</span><button class="who">administrator1${chev(10, "#909399", 1.1)}</button></header>
        <div class="main">
          <aside class="side"><nav class="menu">
            ${item(I.mail, "院系综合管理")}${item(I.squares, "课题综合管理")}${item(I.squares, "基础信息管理")}
            <a href="#">生成课题一览表</a>
          </nav></aside>
          <div class="content"><div class="card">
            <div class="cardhead"></div>
            <div class="tools"><button class="add">添加学生</button></div>
            <table>
              <colgroup>${[1, 2, 3, 4, 5, 6, 7, 8].map((n) => html`<col class="c${n}" />`)}</colgroup>
              <thead><tr><th></th><th></th><th></th><th></th><th></th><th></th><th></th><th>操作</th></tr></thead>
              <tbody>${STUDENTS.map((s, i) => this.row(s, i))}</tbody>
            </table>
          </div></div>
          ${this.bar("inner")}
        </div>
      </div>
      ${this.bar("outer")}
      <div class="box"></div>
      <sheet-window></sheet-window>
      <div class="ime">
        <span class="logo">${I.sogou}</span>
        <span class="it">中</span><span class="it">${I.comma}</span><span class="it">${I.mic}</span><span class="it">${I.kb}</span>
        <span class="it">${I.shirt}</span><span class="it">${I.game}</span><span class="it">${I.apps}</span><span class="it">${I.gear}</span>
      </div>
      <div class="sign">CSDN @小桔子真好看</div>`;
  }
}
